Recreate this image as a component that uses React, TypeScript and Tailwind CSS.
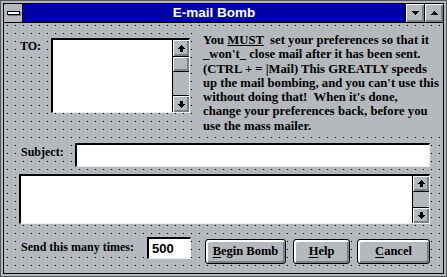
import React from "react";

const GRAY = "bg-[#b5b9bd]";

function UpArrow() {
  return (
    <svg width="7" height="7" viewBox="0 0 7 7" shapeRendering="crispEdges">
      <rect x="3" y="0" width="1" height="1" fill="#000" />
      <rect x="2" y="1" width="3" height="1" fill="#000" />
      <rect x="1" y="2" width="5" height="1" fill="#000" />
      <rect x="0" y="3" width="7" height="1" fill="#000" />
      <rect x="2" y="4" width="3" height="3" fill="#000" />
    </svg>
  );
}

function DownArrow() {
  return (
    <svg width="7" height="7" viewBox="0 0 7 7" shapeRendering="crispEdges">
      <rect x="2" y="0" width="3" height="3" fill="#000" />
      <rect x="0" y="3" width="7" height="1" fill="#000" />
      <rect x="1" y="4" width="5" height="1" fill="#000" />
      <rect x="2" y="5" width="3" height="1" fill="#000" />
      <rect x="3" y="6" width="1" height="1" fill="#000" />
    </svg>
  );
}

function TriDown() {
  return (
    <svg width="7" height="4" viewBox="0 0 7 4" shapeRendering="crispEdges">
      <rect x="0" y="0" width="7" height="1" fill="#000" />
      <rect x="1" y="1" width="5" height="1" fill="#000" />
      <rect x="2" y="2" width="3" height="1" fill="#000" />
      <rect x="3" y="3" width="1" height="1" fill="#000" />
    </svg>
  );
}

function TriUp() {
  return (
    <svg width="7" height="4" viewBox="0 0 7 4" shapeRendering="crispEdges">
      <rect x="3" y="0" width="1" height="1" fill="#000" />
      <rect x="2" y="1" width="3" height="1" fill="#000" />
      <rect x="1" y="2" width="5" height="1" fill="#000" />
      <rect x="0" y="3" width="7" height="1" fill="#000" />
    </svg>
  );
}

function Button({ w, first, rest }: { w: string; first: string; rest: string }) {
  return (
    <div
      className={`${w} h-[25px] mt-[2px] border border-black rounded-[3px] ${GRAY} shadow-[inset_2px_2px_0_#ffffff,inset_-2px_-2px_0_#7c8084] flex items-center justify-center text-[12.5px] font-bold text-black leading-none`}
    >
      <span>
        <span className="underline underline-offset-[2px]">{first}</span>
        {rest}
      </span>
    </div>
  );
}

export default function App() {
  return (
    <div
      className={`w-[447px] h-[277px] ${GRAY} border border-[#52565a] p-[2px] font-['Liberation_Serif',serif] text-black`}
    >
      <div className="w-full h-full border border-black flex flex-col">
        {/* Title bar */}
        <div className="h-[19px] flex border-b border-black shrink-0">
          <div
            className={`w-[19px] h-full border-r border-black ${GRAY} flex items-center justify-center`}
          >
            <div className="w-[13px] h-[4px] border border-black bg-white shadow-[1px_1px_0_#7c8084]" />
          </div>
          <div className="flex-1 bg-[#0000a8] flex items-center justify-center text-white font-['Liberation_Sans',sans-serif] font-bold text-[13.5px] leading-none">
            E-mail Bomb
          </div>
          <div
            className={`w-[19px] h-full border-l border-black ${GRAY} shadow-[inset_1px_1px_0_#ffffff,inset_-2px_-2px_0_#7c8084] flex items-center justify-center`}
          >
            <TriDown />
          </div>
          <div
            className={`w-[19px] h-full border-l border-black ${GRAY} shadow-[inset_1px_1px_0_#ffffff,inset_-2px_-2px_0_#7c8084] flex items-center justify-center`}
          >
            <TriUp />
          </div>
        </div>

        {/* Client area */}
        <div className="flex-1 flex flex-col bg-[image:conic-gradient(at_1px_1px,transparent_75%,#000_0)] bg-[length:8px_8px] bg-[position:3px_2px]">
          {/* Row 1 */}
          <div className="mt-[8px] h-[112px] flex items-start">
            <div
              className={`ml-[12px] mt-[7px] w-[30px] h-[16px] pl-[4px] ${GRAY} text-[12px] font-bold leading-[16px]`}
            >
              TO:
            </div>
            <div className="ml-[5px] mt-[7px] w-[139px] h-[75px] flex bg-white border-t-2 border-l-2 border-r border-b border-t-black border-l-black border-r-[#eef0f2] border-b-[#eef0f2]">
              <div className="flex-1" />
              <div className={`w-[17px] h-full border-l border-black ${GRAY} flex flex-col`}>
                <div className="h-[17px] border-b border-black shadow-[inset_1px_1px_0_#ffffff,inset_-2px_-2px_0_#7c8084] flex items-center justify-center">
                  <UpArrow />
                </div>
                <div className="h-[15px] border-b border-black shadow-[inset_1px_1px_0_#ffffff,inset_-2px_-2px_0_#7c8084]" />
                <div className="flex-1" />
                <div className="h-[17px] border-t border-black shadow-[inset_1px_1px_0_#ffffff,inset_-2px_-2px_0_#7c8084] flex items-center justify-center">
                  <DownArrow />
                </div>
              </div>
            </div>
            <div
              className={`ml-[8px] mt-[1px] w-[244px] pt-[1px] pb-[3px] pl-[5px] ${GRAY} text-[12.7px] font-bold leading-[14.3px] whitespace-pre`}
            >
              <div>
                You <span className="underline">MUST</span>{"  set your preferences so that it"}
              </div>
              <div>_won't_ close mail after it has been sent.</div>
              <div>(CTRL + = |Mail) This GREATLY speeds</div>
              <div>up the mail bombing, and you can't use this</div>
              <div>{"without doing that!  When it's done,"}</div>
              <div>change your preferences back, before you</div>
              <div>use the mass mailer.</div>
            </div>
          </div>

          {/* Row 2 */}
          <div className="h-[24px] flex items-start">
            <div
              className={`ml-[13px] mt-[1px] w-[54px] h-[16px] pl-[4px] ${GRAY} text-[12px] font-bold leading-[16px]`}
            >
              Subject:
            </div>
            <div className="ml-[4px] w-[355px] h-[24px] bg-white border-t-2 border-l-2 border-r border-b border-t-black border-l-black border-r-[#eef0f2] border-b-[#eef0f2]" />
          </div>

          {/* Row 3 */}
          <div className="mt-[7px] ml-[15px] w-[411px] h-[50px] flex bg-white border-t-2 border-l-2 border-r border-b border-t-black border-l-black border-r-[#eef0f2] border-b-[#eef0f2]">
            <div className="flex-1" />
            <div className={`w-[17px] h-full border-l border-black ${GRAY} flex flex-col`}>
              <div className="h-[16px] border-b border-black shadow-[inset_1px_1px_0_#ffffff,inset_-2px_-2px_0_#7c8084] flex items-center justify-center">
                <UpArrow />
              </div>
              <div className="flex-1" />
              <div className="h-[16px] border-t border-black shadow-[inset_1px_1px_0_#ffffff,inset_-2px_-2px_0_#7c8084] flex items-center justify-center">
                <DownArrow />
              </div>
            </div>
          </div>

          {/* Row 4 */}
          <div className="mt-[13px] flex items-start">
            <div
              className={`ml-[13px] mt-[2px] w-[127px] h-[16px] pl-[4px] ${GRAY} text-[12px] font-bold leading-[16px]`}
            >
              Send this many times:
            </div>
            <div className="ml-[3px] w-[44px] h-[22px] bg-white border-t-2 border-l-2 border-r border-b border-t-black border-l-black border-r-[#eef0f2] border-b-[#eef0f2] flex items-center pl-[3px] font-['Liberation_Sans',sans-serif] font-bold text-[13px] leading-none">
              500
            </div>
            <div className="ml-[14px]">
              <Button w="w-[81px]" first="B" rest="egin Bomb" />
            </div>
            <div className="ml-[7px]">
              <Button w="w-[57px]" first="H" rest="elp" />
            </div>
            <div className="ml-[7px]">
              <Button w="w-[73px]" first="C" rest="ancel" />
            </div>
          </div>
        </div>
      </div>
    </div>
  );
}
